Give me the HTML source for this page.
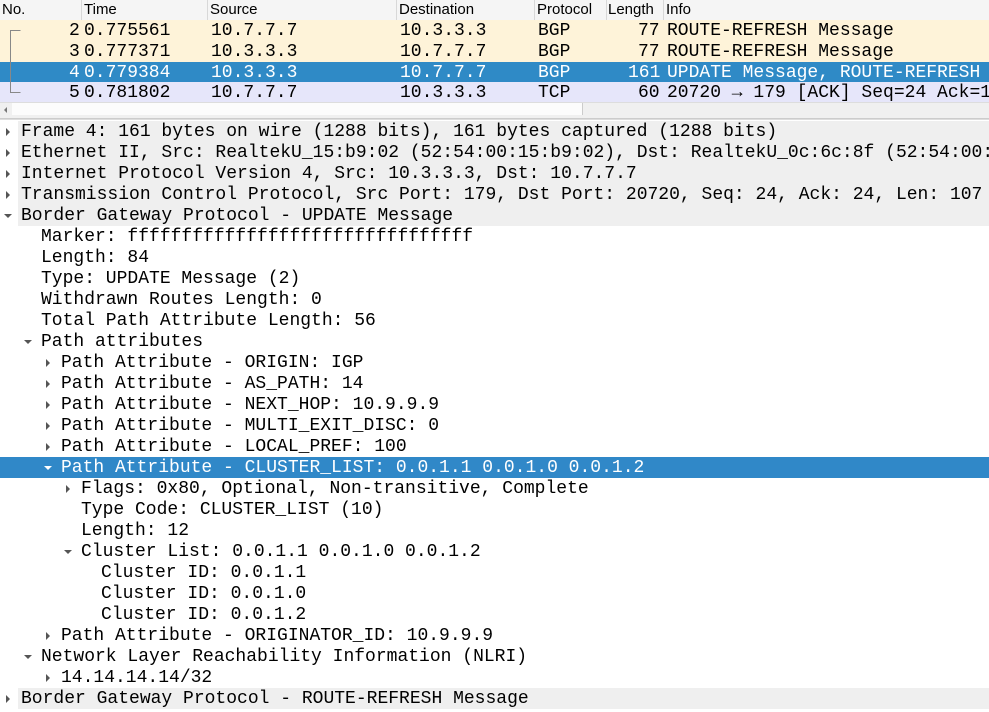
<!DOCTYPE html>
<html><head><meta charset="utf-8"><style>
body{margin:0;width:989px;height:712px;overflow:hidden;background:#fff;position:relative;font-family:"Liberation Mono",monospace;font-size:18px;color:#000}
.h{position:absolute;top:0;left:0;width:989px;height:20px;background:#f5f5f5;border-bottom:1px solid #cfcfcf;font-family:"Liberation Sans",sans-serif;font-size:15px}
.h span{position:absolute;top:1px}
.h i{position:absolute;top:0;height:20px;border-left:1px solid #d8d8d8}
.r{position:absolute;left:0;width:989px;height:21px;line-height:23px;white-space:pre}
.r span{position:absolute;top:0}
.l{position:absolute;left:0;width:989px;height:21px;line-height:23px;white-space:pre}
.l.g{background:#efefef;left:18px}
.sel{background:#3088c8;color:#fff}
.a{position:absolute;top:0;width:0;height:0}
.ar{border-top:4px solid transparent;border-bottom:4px solid transparent;border-left:4px solid #555}
.ad{border-left:4px solid transparent;border-right:4px solid transparent;border-top:4px solid #555}
</style></head><body>
<div class="h">
<span style="left:2px">No.</span><i style="left:81px"></i>
<span style="left:84px">Time</span><i style="left:207px"></i>
<span style="left:210px">Source</span><i style="left:396px"></i>
<span style="left:399px">Destination</span><i style="left:534px"></i>
<span style="left:537px">Protocol</span><i style="left:606px"></i>
<span style="left:608px">Length</span><i style="left:663px"></i>
<span style="left:666px">Info</span>
</div>
<div class="r" style="top:20px;background:#fef3d9"><span style="left:69px">2</span><span style="left:84px">0.775561</span><span style="left:211px">10.7.7.7</span><span style="left:400px">10.3.3.3</span><span style="left:538px">BGP</span><span style="left:638px">77</span><span style="left:667px">ROUTE-REFRESH Message</span></div>
<div class="r" style="top:41px;background:#fef3d9"><span style="left:69px">3</span><span style="left:84px">0.777371</span><span style="left:211px">10.3.3.3</span><span style="left:400px">10.7.7.7</span><span style="left:538px">BGP</span><span style="left:638px">77</span><span style="left:667px">ROUTE-REFRESH Message</span></div>
<div class="r" style="top:62px;background:#2f8ac6;color:#fff"><span style="left:69px">4</span><span style="left:84px">0.779384</span><span style="left:211px">10.3.3.3</span><span style="left:400px">10.7.7.7</span><span style="left:538px">BGP</span><span style="left:628px">161</span><span style="left:667px">UPDATE Message, ROUTE-REFRESH</span></div>
<div class="r" style="top:82px;background:#e6e6fa"><span style="left:69px">5</span><span style="left:84px">0.781802</span><span style="left:211px">10.7.7.7</span><span style="left:400px">10.3.3.3</span><span style="left:538px">TCP</span><span style="left:638px">60</span><span style="left:667px">20720 → 179 [ACK] Seq=24 Ack=1</span></div>
<svg style="position:absolute;left:0;top:20px" width="30" height="82"><path d="M20.5 10.5H10.5V72.5H20.5" fill="none" stroke="#888"/></svg>
<div style="position:absolute;top:102px;left:0;width:989px;height:15px;background:#f0f0f0;border-top:1px solid #ddd;border-bottom:1px solid #ccc"></div>
<div style="position:absolute;top:103px;left:12px;width:570px;height:12px;background:#fcfcfc;border-right:1px solid #ccc"></div>
<div style="position:absolute;top:107px;left:4px;width:0;height:0;border-top:3px solid transparent;border-bottom:3px solid transparent;border-right:3px solid #777"></div>
<div style="position:absolute;top:119px;left:0;width:989px;height:1px;background:#ddd"></div>
<div id="d"></div>
<script>
var L=[
[0,'r','Frame 4: 161 bytes on wire (1288 bits), 161 bytes captured (1288 bits)'],
[0,'r','Ethernet II, Src: RealtekU_15:b9:02 (52:54:00:15:b9:02), Dst: RealtekU_0c:6c:8f (52:54:00:'],
[0,'r','Internet Protocol Version 4, Src: 10.3.3.3, Dst: 10.7.7.7'],
[0,'r','Transmission Control Protocol, Src Port: 179, Dst Port: 20720, Seq: 24, Ack: 24, Len: 107'],
[0,'d','Border Gateway Protocol - UPDATE Message'],
[1,'','Marker: ffffffffffffffffffffffffffffffff'],
[1,'','Length: 84'],
[1,'','Type: UPDATE Message (2)'],
[1,'','Withdrawn Routes Length: 0'],
[1,'','Total Path Attribute Length: 56'],
[1,'d','Path attributes'],
[2,'r','Path Attribute - ORIGIN: IGP'],
[2,'r','Path Attribute - AS_PATH: 14'],
[2,'r','Path Attribute - NEXT_HOP: 10.9.9.9'],
[2,'r','Path Attribute - MULTI_EXIT_DISC: 0'],
[2,'r','Path Attribute - LOCAL_PREF: 100'],
[2,'d','Path Attribute - CLUSTER_LIST: 0.0.1.1 0.0.1.0 0.0.1.2',1],
[3,'r','Flags: 0x80, Optional, Non-transitive, Complete'],
[3,'','Type Code: CLUSTER_LIST (10)'],
[3,'','Length: 12'],
[3,'d','Cluster List: 0.0.1.1 0.0.1.0 0.0.1.2'],
[4,'','Cluster ID: 0.0.1.1'],
[4,'','Cluster ID: 0.0.1.0'],
[4,'','Cluster ID: 0.0.1.2'],
[2,'r','Path Attribute - ORIGINATOR_ID: 10.9.9.9'],
[1,'d','Network Layer Reachability Information (NLRI)'],
[2,'r','14.14.14.14/32'],
[0,'r','Border Gateway Protocol - ROUTE-REFRESH Message']];
var h='';
L.forEach(function(e,i){var t=121+21*i,x=21+20*e[0];
if(e[0]==0)h+='<div class="l g" style="top:'+t+'px;width:971px"></div>';
if(e[3])h+='<div class="l sel" style="top:'+t+'px"></div>';
if(e[1]=='r')h+='<div class="a ar" style="top:'+(t+7)+'px;left:'+(x-15)+'px;'+(e[3]?'border-left-color:#fff':'')+'"></div>';
if(e[1]=='d')h+='<div class="a ad" style="top:'+(t+9)+'px;left:'+(x-17)+'px;'+(e[3]?'border-top-color:#fff':'')+'"></div>';
h+='<div class="l" style="top:'+t+'px;left:'+x+'px;width:auto;'+(e[3]?'color:#fff':'')+'">'+e[2]+'</div>';});
document.getElementById('d').innerHTML=h;
</script>
</body></html>
